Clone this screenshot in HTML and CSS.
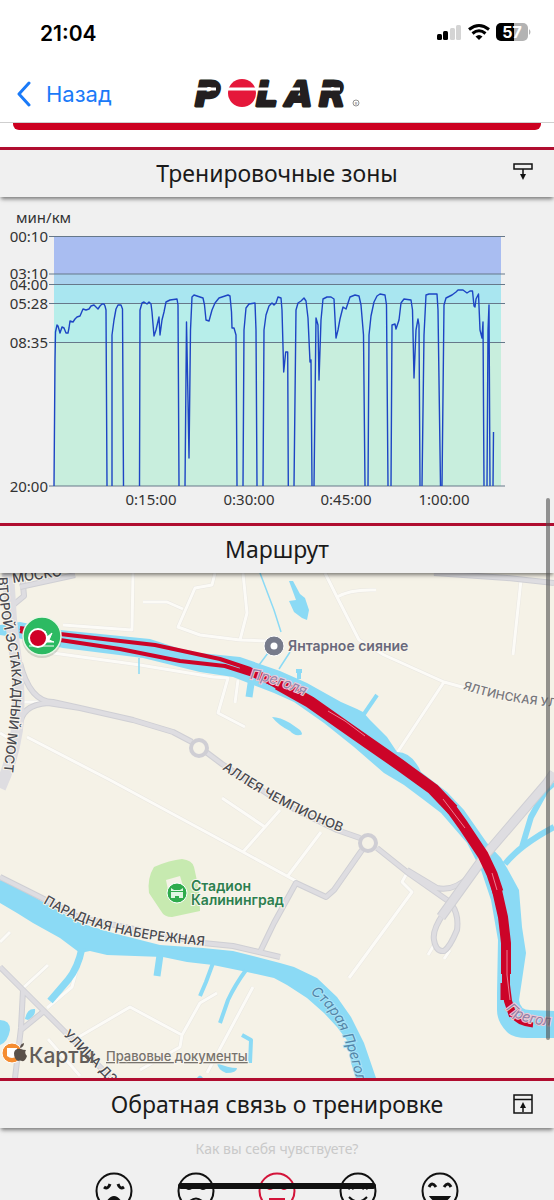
FILE: index.html
```html
<!DOCTYPE html>
<html lang="ru">
<head>
    <meta charset="UTF-8">
    <meta name="viewport" content="width=device-width, initial-scale=1.0">
    <title>Polar</title>
    <link rel="stylesheet" href="styles.css">
</head>
<body>
    <div class="screen">
        <div class="status-bar">
            <span class="clock">21:04</span>
            <svg class="status-icons" width="96" height="20" viewBox="0 0 96 20" aria-hidden="true">
                <rect x="1" y="11" width="5" height="6" rx="1.5"/>
                <rect x="7" y="8" width="5" height="9" rx="1.5"/>
                <rect x="14" y="5" width="5" height="12" rx="1.5" fill="#d4d4d4"/>
                <rect x="20" y="2" width="5" height="15" rx="1.5" fill="#d4d4d4"/>
                <g fill="none" stroke="#000" stroke-width="3">
                    <path d="M33 6.5Q43 -1.5 53 6.5"/>
                    <path d="M36.5 10.5Q43 5 49.5 10.5"/>
                </g>
                <path d="M39.500 13.500Q43 10.500 46.500 13.500L43 17Z"/>
                <rect x="60" y="0" width="32" height="18" rx="5" fill="#b3b3b3"/>
                <path d="M65 0H78V18H65A5 5 0 0 1 60 13V5A5 5 0 0 1 65 0Z"/>
                <path d="M93 6Q96 9 93 12Z" fill="#b3b3b3"/>
                <text class="battery-text" x="76" y="15">57</text>
            </svg>
        </div>

        <header class="nav">
            <a class="back" href="#">
                <svg width="16" height="26" viewBox="0 0 16 26" aria-hidden="true">
                    <path d="M13 2L3 13L13 24" fill="none" stroke="#1a7af8" stroke-width="3" stroke-linecap="round" stroke-linejoin="round"/>
                </svg>
                Назад
            </a>
            <svg class="logo" width="170" height="30" viewBox="0 0 170 30" role="img" aria-label="Polar">
                <text class="logo-text" x="3 64 94 127" y="27">PLAR</text>
                <circle cx="50" cy="14" r="14" fill="#e5173a"/>
                <path d="M4 10H24M34 10H108M124 10H148" stroke="#fff" stroke-width="3"/>
                <circle cx="164" cy="24" r="3" fill="none" stroke="#666" stroke-width="0.700"/>
                <text class="logo-mark" x="164" y="26">R</text>
            </svg>
        </header>

        <main>
            <div class="card-end"></div>

            <section>
                <div class="section-head">
                    <h2>Тренировочные зоны</h2>
                    <button class="toggle" type="button" aria-label="Развернуть">
                        <svg width="20" height="20" viewBox="0 0 20 20" fill="none" stroke="#111" stroke-width="1.500">
                            <path d="M1 1H19V6H1ZM10 6V12"/>
                            <path d="M7 11H13L10 17Z" fill="#111" stroke="none"/>
                        </svg>
                    </button>
                </div>
                <svg class="chart" viewBox="0 197 554 326" role="img" aria-label="Темп по зонам">
                    <rect x="54" y="236" width="447" height="38" fill="#a9bdf1"/>
                    <rect x="54" y="274" width="447" height="10" fill="#a9d2ee"/>
                    <rect x="54" y="284" width="447" height="19" fill="#a9e6f0"/>
                    <rect x="54" y="303" width="447" height="39" fill="#b7eeea"/>
                    <rect x="54" y="342" width="447" height="144" fill="#c8eedd"/>
                    <path d="M49 236.500H505M49 274H505M49 284.500H505M49 303.500H505M49 342.500H505M49 486H505" stroke="#66788a" stroke-width="1.200"/>
                    <path class="pace" d="M54 486L55 360L55.500 332L57 325L58 326L60 333L62 327L64 328L66 333L68 333L69 328L70 321L73 322L75 319L77 317L80 316L83 309L86 310L89 309L91 306L94 305L96 307L98 309L100 306L102 304L104 304L105 306L106 310L107 486
                        M112 486V335L114 320L116 309L118 305L121 305L122.500 309L123.500 486
                        M139.500 486L140 310L142 303L144 302L147 304L149 302L151 304L152 312L154 336L156 330L159 317L160 335L162 320L164 312L166 302L170 300L177 299L178 305L179 486
                        M185 486L186.500 322L188 400L189 458L190.500 330L192 297L194 295L200 297L203 298L204.500 305L206 320L209 321L212 310L215 303L219 298L225 296L228 295L230 296L231.500 312L232 328L234 328L236 335L237 486
                        M243 486L244 330L246 308L249 304L255 303L256 330L257 486
                        M263 486L264 330L266 315L269 306L272 303L274 305L276 303L278 297L281 298L282 310L283.700 372L285.700 352L287.700 352L288.300 486
                        M294 486L296 310L298 303L301 301L304 298L306 301L308 318L310 362L311 360L312 486
                        M314 486L316 318L318 325L319 380L321 320L323 299L327 297L331 297L334 299L336 338L338 330L340 319L343 307L346 309L350 297L355 295L359 296L361 305L363.500 335L365 486
                        M368 486L369 335L371 316L374 302L377 296L380 294L385 295L386.500 305L388 486
                        M391 486L392 325L395 324L396 329L399 320L401 303L404 299L411 300L412.500 310L414 378L416 330L418 319L419 325L420 486
                        M422 486L424 335L426 295L429 294L437 294L438 310L440.500 486
                        M442 486L444 305L446 298L452 295L456 292L458 290L463 290L467 293L470 291L472.500 291L474 306L475 307L476 299L478.500 294L480 330L482 338L483 322L484 486
                        M487 486L488 330L489 305L490 486M493 486L493.500 432"/>
                    <g class="axis">
                        <text x="16" y="223">мин/км</text>
                        <g text-anchor="end">
                            <text x="48" y="242">00:10</text>
                            <text x="48" y="279">03:10</text>
                            <text x="48" y="290">04:00</text>
                            <text x="48" y="309">05:28</text>
                            <text x="48" y="348">08:35</text>
                            <text x="48" y="492">20:00</text>
                        </g>
                        <g text-anchor="middle">
                            <text x="151" y="505">0:15:00</text>
                            <text x="249" y="505">0:30:00</text>
                            <text x="346" y="505">0:45:00</text>
                            <text x="444" y="505">1:00:00</text>
                        </g>
                    </g>
                </svg>
            </section>

            <section>
                <div class="section-head">
                    <h2>Маршрут</h2>
                </div>
                <svg class="map" viewBox="0 573 554 505" role="group" aria-label="Карта маршрута">
                    <defs>
                        <path id="p-most" d="M-2 577C0 630 13 650 12 690C11 725 5 740 2 800"/>
                        <path id="p-mosk" d="M13 583L62 576"/>
                        <path id="p-alley" d="M222 769Q285 813 362 840"/>
                        <path id="p-yalta" d="M463 689Q505 704 570 708"/>
                        <path id="p-parad" d="M43 903C90 931 130 939 225 948"/>
                        <path id="p-ulitsa" d="M63 1035L125 1098"/>
                        <path id="p-preg" d="M250 679Q282 683 325 706"/>
                        <path id="p-preg2" d="M506 1009Q520 1029 575 1025"/>
                        <path id="p-old" d="M310 993C342 1015 348 1048 362 1100"/>
                    </defs>

                    <!-- small streets -->
                    <path class="street-edge" d="M133 573L132 630L63 625M143 602H167L183 609M215 573L212 585L195 588L178 627L200 635L240 640L247 613L243 573M240 640L267 641M53 653L140 665L213 677L228 678L218 713L245 727M238 680L235 703M27 737L110 780L243 852L296 881M222 798L265 827M280 810L243 852M321 832L287 877M407 873L402 882L412 892L349 978M325 573L337 597L359 640L384 655L444 682L480 692M337 597Q350 589 376 590M521 580L513 655M444 682L397 753M48 965L23 988M80 957L72 987L47 1008M77 1038L130 1007L182 1035L180 1047L140 1070M182 1035L200 1003L217 993M253 987L207 1073M0 733L20 745M0 942L10 932M48 1039L80 1076M20 702H50M434 945L428 955M450 950L444 959"/>
                    <path class="street" d="M133 573L132 630L63 625M143 602H167L183 609M215 573L212 585L195 588L178 627L200 635L240 640L247 613L243 573M240 640L267 641M53 653L140 665L213 677L228 678L218 713L245 727M238 680L235 703M27 737L110 780L243 852L296 881M222 798L265 827M280 810L243 852M321 832L287 877M407 873L402 882L412 892L349 978M325 573L337 597L359 640L384 655L444 682L480 692M337 597Q350 589 376 590M521 580L513 655M444 682L397 753M48 965L23 988M80 957L72 987L47 1008M77 1038L130 1007L182 1035L180 1047L140 1070M182 1035L200 1003L217 993M253 987L207 1073M0 733L20 745M0 942L10 932M48 1039L80 1076M20 702H50M434 945L428 955M450 950L444 959"/>

                    <!-- rivers and ponds -->
                    <g fill="#8bdaf5">
                        <path d="M0 625L20 622L60 630L150 639L190 652L240 657L280 671L307 683L341 702L357 709L363 712L370 720L387 737L397 752Q412 752 421 772L447 792L464 810L487 843L501 858L507 868L519 890L522 927L526 953L522 980L519 1000Q520 1010 530 1010L554 1011V1038H527Q513 1038 507 1032Q497 1022 497 1010V993L498 940L491 900L481 870L467 843L441 813L424 800L404 785L384 773L354 747L324 723L294 702L274 693L233 677L200 672L143 658L63 648L13 637L0 635Z"/>
                        <path d="M0 880L20 888L43 902L80 923L113 933L160 945L203 948L233 951L280 963L294 967L317 978L337 997L351 1017L364 1043L376 1078H356L351 1063L349 1043L337 1027L324 1013L307 998L287 985L274 978L247 972L213 965L187 962L163 957L107 955L90 951L80 953L60 938L33 923L17 913L0 903Z"/>
                        <path d="M289 581L293 581L300 594L305 598L309 610L307 620L302 618L294 612L289 601L296 600Z"/>
                        <path d="M272 717Q280 717 290 723L300 730Q304 735 300 735Q294 736 290 731Q278 725 272 717Z"/>
                        <path d="M0 1020Q10 1020 10 1030Q8 1042 0 1045ZM25 1019Q27 1008 35 1009Q36 1016 28 1020ZM217 1063Q228 1068 237 1068Q237 1073 226 1073Q218 1070 217 1063ZM197 1078Q200 1073 203 1078Z"/>
                    </g>
                    <g fill="none" stroke="#8bdaf5" stroke-linejoin="round">
                        <path stroke-width="7" d="M82 948Q78 968 68 980L50 1001M160 955L157 976M252 677L249 697"/>
                        <path stroke-width="4" d="M213 963L206 982L200 996M246 970Q235 985 228 1000L220 1023M242 1035L251 1040L250 1063M364 714L377 695M299 670V679M296 671H302"/>
                        <path stroke-width="6" d="M505 864Q520 845 554 827M522 847L531 817L546 790L554 783"/>
                        <path stroke-width="1.500" d="M260 573L274 610L281 632M290 652L279 669M268 653L259 665M139 658V674"/>
                    </g>

                    <path d="M154 867Q170 860 182 859Q192 860 194 867L199 890L200 911L172 917Q164 917 161 911L149 893Q147 878 154 867Z" fill="#c7eab0"/>
                    <path d="M166 880L180 876L183 886L168 890Z" fill="#f5f2e7"/>

                    <!-- main roads -->
                    <path class="road-edge" d="M20 663Q30 702 53 702L80 708L133 720L173 732L192 742M80 708L48 703Q20 705 20 727M206 752L222 764L280 802L337 830L360 838M377 848L407 872L454 905M407 870L437 888Q454 892 471 875M362 850L334 890L326 897L296 883L274 923L260 952M0 877L40 897L80 918L203 943L233 946L280 957M434 573L507 578L554 583M12 606L24 596L22 573"/>
                    <path class="road" d="M20 663Q30 702 53 702L80 708L133 720L173 732L192 742M80 708L48 703Q20 705 20 727M206 752L222 764L280 802L337 830L360 838M377 848L407 872L454 905M407 870L437 888Q454 892 471 875M362 850L334 890L326 897L296 883L274 923L260 952M0 877L40 897L80 918L203 943L233 946L280 957M434 573L507 578L554 583M12 606L24 596L22 573"/>
                    <path class="road-edge" d="M0 967L23 990L43 1010L63 1030L110 1077M23 990L21 1028L15 1078M43 1012L21 1030M444 913Q432 930 434 940Q436 952 444 951Q450 947 457 930Q459 915 452 905M20 587L75 575"/>
                    <path class="road" d="M0 967L23 990L43 1010L63 1030L110 1077M23 990L21 1028L15 1078M43 1012L21 1030M444 913Q432 930 434 940Q436 952 444 951Q450 947 457 930Q459 915 452 905M20 587L75 575"/>
                    <path d="M8 573L11 620L17 670Q20 700 17 730Q12 762 0 788" fill="none" stroke="#dedde1" stroke-width="12"/>
                    <path d="M554 773L547 783L487 853L441 917" fill="none" stroke="#cfcfd4" stroke-width="10"/>
                    <path d="M554 773L547 783L487 853L441 917" fill="none" stroke="#dedde1" stroke-width="8"/>
                    <g fill="#f5f2e7" stroke="#cfced4" stroke-width="4">
                        <circle cx="199" cy="748" r="8"/>
                        <circle cx="368" cy="843" r="8"/>
                    </g>

                    <!-- recorded track -->
                    <g fill="none" stroke="#cc0428" stroke-linejoin="round">
                        <path stroke-width="4" d="M20 628L60 634L155 645L220 659L250 669L275 680M20 631L60 640L120 649L180 661L225 666L250 674L275 685"/>
                        <path stroke-width="7" d="M240 668L256 674L275 684L296 696"/>
                        <path stroke-width="12" d="M278 684L310 702L337 721L367 742L400 765L433 789L453 810"/>
                        <path stroke-width="11" d="M448 804L463 825L483 855L492 874L498 892"/>
                        <path stroke-width="10" d="M496 886L503 917L506 943L506 974"/>
                        <path stroke-width="8" d="M506 970L506 985L508 1001L513 1016"/>
                        <path stroke-width="5" d="M503 983V1000M511 1012Q515 1023 533 1025"/>
                    </g>
                    <path d="M328 711L345 721L365 736M443 799L465 828M492 873L497 890M507 950V975L510 1000" fill="none" stroke="#ec7d92" stroke-width="1"/>

                    <g class="road-label">
                        <text><textPath href="#p-mosk">МОСКО</textPath></text>
                        <text><textPath href="#p-most">ВТОРОЙ ЭСТАКАДНЫЙ МОСТ</textPath></text>
                        <text><textPath href="#p-alley">АЛЛЕЯ ЧЕМПИОНОВ</textPath></text>
                        <text class="minor"><textPath href="#p-yalta">ЯЛТИНСКАЯ УЛИ</textPath></text>
                        <text><textPath href="#p-parad">ПАРАДНАЯ НАБЕРЕЖНАЯ</textPath></text>
                        <text><textPath href="#p-ulitsa">УЛИЦА ДЗ</textPath></text>
                    </g>
                    <g class="water-label">
                        <text class="on-track"><textPath href="#p-preg">Преголя</textPath></text>
                        <text class="on-track"><textPath href="#p-preg2">Прегол</textPath></text>
                        <text><textPath href="#p-old">Старая Прегол</textPath></text>
                    </g>

                    <!-- places -->
                    <circle cx="274" cy="646" r="10" fill="#777b8b" stroke="#fff" stroke-width="1"/>
                    <circle cx="274" cy="646" r="3.500" fill="#fff"/>
                    <text class="place" x="288" y="651">Янтарное сияние</text>

                    <circle cx="177" cy="893" r="10" fill="#2eab4c" stroke="#fff" stroke-width="1"/>
                    <path d="M171 888L174 890H180L183 888V891H171ZM171 892H183V898H179V896H175V898H171Z" fill="#dff5e2"/>
                    <g class="stadium">
                        <text class="place" x="191" y="891">Стадион</text>
                        <text class="place" x="191" y="905">Калининград</text>
                    </g>

                    <!-- start and finish -->
                    <circle cx="42" cy="638" r="20" fill="#7f8b7f" opacity="0.300"/>
                    <circle cx="42" cy="636" r="19" fill="#2cba62" stroke="#e9f7e7" stroke-width="1.500"/>
                    <path d="M29 646H54M45 631L47 637L52 633L49 640L54 642H36Z" fill="#fff" stroke="#fff" stroke-width="1"/>
                    <circle cx="38" cy="638" r="9" fill="#d00027" stroke="#fff" stroke-width="2"/>

                    <circle cx="12" cy="1053" r="10" fill="#f58c30" stroke="#fff" stroke-width="1"/>
                    <path d="M7 1048H17V1056Q12 1060 7 1056Z" fill="#fff"/>
                    <path d="M21 1049Q23 1050 26 1050Q24 1053 27 1056Q25 1062 22 1061Q20 1060 18 1061Q14 1059 14 1053Q15 1048 21 1049ZM20 1048Q20 1044 24 1043Q24 1047 20 1048Z" fill="#59504a"/>
                    <text class="maps-brand" x="29" y="1063">Карты</text>
                    <a href="#"><text class="legal" x="106" y="1061">Правовые документы</text></a>
                </svg>
            </section>

            <section>
                <div class="section-head">
                    <h2>Обратная связь о тренировке</h2>
                    <button class="toggle" type="button" aria-label="Свернуть">
                        <svg width="20" height="20" viewBox="0 0 20 20" fill="none" stroke="#111" stroke-width="1.500">
                            <path d="M1 1H19V19H1ZM1 5.500H19M10 18V12"/>
                            <path d="M7 14H13L10 8Z" fill="#111" stroke="none"/>
                        </svg>
                    </button>
                </div>
                <form class="feedback">
                    <p>Как вы себя чувствуете?</p>
                    <div class="faces">
                        <label class="face" aria-label="Очень плохо">
                            <input type="radio" name="mood">
                            <svg width="38" height="38" viewBox="0 0 38 38">
                                <circle cx="19" cy="19" r="17.500"/>
                                <path d="M9 15Q13 18 15 12M23 12Q25 18 29 15" stroke-width="3"/>
                                <path d="M13 29Q19 21 25 29Z" fill="currentColor"/>
                            </svg>
                        </label>
                        <label class="face" aria-label="Плохо">
                            <input type="radio" name="mood">
                            <svg width="38" height="38" viewBox="0 0 38 38">
                                <circle cx="19" cy="19" r="17.500"/>
                                <path d="M9 15Q12 18 15 15M23 15Q26 18 29 15" stroke-width="3"/>
                                <path d="M13 29Q19 24 25 29"/>
                            </svg>
                        </label>
                        <label class="face" aria-label="Нормально">
                            <input type="radio" name="mood" checked>
                            <svg width="38" height="38" viewBox="0 0 38 38">
                                <circle cx="19" cy="19" r="17.500"/>
                                <path d="M9 15Q12 18 15 15M23 15Q26 18 29 15" stroke-width="3"/>
                                <path d="M11 27H27"/>
                            </svg>
                        </label>
                        <label class="face" aria-label="Хорошо">
                            <input type="radio" name="mood">
                            <svg width="38" height="38" viewBox="0 0 38 38">
                                <circle cx="19" cy="19" r="17.500"/>
                                <path d="M9 17Q12 13 15 17M23 17Q26 13 29 17" stroke-width="3"/>
                                <path d="M10 25Q19 34 28 25"/>
                            </svg>
                        </label>
                        <label class="face" aria-label="Отлично">
                            <input type="radio" name="mood">
                            <svg width="38" height="38" viewBox="0 0 38 38">
                                <circle cx="19" cy="19" r="17.500"/>
                                <path d="M8 15Q11 9 15 15M23 15Q27 9 30 15" stroke-width="3"/>
                                <path d="M10 25H28Q19 36 10 25Z" fill="currentColor"/>
                            </svg>
                        </label>
                    </div>
                </form>
            </section>
        </main>

        <div class="scroll-thumb"></div>
        <div class="home-indicator"></div>
    </div>
</body>
</html>
```
FILE: styles.css
```css
body {
    margin: 0;
    background-color: #f0f0f0;
    color: #1a1a1a;
    font-family: "Noto Sans", sans-serif;
}
.screen {
    position: relative;
    height: 100vh;
    overflow: hidden;
}
.status-bar {
    display: flex;
    justify-content: space-between;
    align-items: center;
    height: 66px;
    padding: 0 22px 0 40px;
    box-sizing: border-box;
    background-color: white;
}
.clock {
    font-family: Inter, sans-serif;
    font-size: 21px;
    font-weight: 600;
    color: #000;
}
.battery-text {
    font-family: Inter, sans-serif;
    font-size: 16px;
    font-weight: 700;
    fill: #fff;
    text-anchor: middle;
}
.nav {
    display: grid;
    grid-template-columns: 1fr auto 1fr;
    align-items: center;
    height: 57px;
    padding: 0 16px;
    box-sizing: border-box;
    background-color: white;
    border-bottom: 1px solid #cfcfcf;
}
.back {
    display: flex;
    align-items: center;
    gap: 14px;
    color: #1a7af8;
    font-family: Inter, sans-serif;
    font-size: 22px;
    text-decoration: none;
}
.logo {
    overflow: visible;
}
.logo-text {
    font-family: "DejaVu Sans", sans-serif;
    font-size: 34px;
    font-weight: 700;
    font-style: italic;
    fill: #231f20;
    stroke: #231f20;
    stroke-width: 3;
    stroke-linejoin: round;
}
.logo-mark {
    font-family: Inter, sans-serif;
    font-size: 4px;
    fill: #666;
    text-anchor: middle;
}
.card-end {
    height: 24px;
    padding: 0 13px;
    background-color: white;
}
.card-end::before {
    content: "";
    display: block;
    height: 7px;
    background-color: #cc0020;
    border-radius: 0 0 6px 6px;
}
.section-head {
    position: relative;
    display: grid;
    grid-template-columns: 20px 1fr 20px;
    align-items: center;
    height: 50px;
    padding: 0 21px 2px;
    box-sizing: border-box;
    background-color: #f0f0f0;
    border-top: 3px solid #b00d2f;
    box-shadow: 0 3px 4px -1px rgba(0, 0, 0, 0.5);
}
h2 {
    grid-column: 2;
    margin: 0;
    font-size: 23px;
    font-weight: 400;
    text-align: center;
    white-space: nowrap;
}
.toggle {
    width: 20px;
    height: 20px;
    padding: 0;
    border: none;
    background: none;
}
.toggle svg {
    display: block;
}
.chart, .map {
    display: block;
    width: 100%;
}
.pace {
    fill: none;
    stroke: #1d45c4;
    stroke-width: 1.4;
    stroke-linejoin: round;
}
.axis {
    font-size: 15px;
    fill: #333;
}
.map {
    background-color: #f5f2e7;
    font-family: Inter, sans-serif;
}
.street-edge, .street, .road-edge, .road {
    fill: none;
    stroke-linejoin: round;
}
.street-edge {
    stroke: #e9e7e2;
    stroke-width: 4;
}
.street {
    stroke: #fcfbf7;
    stroke-width: 3;
}
.road-edge {
    stroke: #cfcfd4;
    stroke-width: 6;
}
.road {
    stroke: #dedde1;
    stroke-width: 4;
}
.road-label text, .water-label text, .place, .legal {
    paint-order: stroke;
    stroke: #f8f5ec;
    stroke-width: 2;
}
.road-label {
    font-size: 13px;
    font-weight: 500;
    fill: #4a4a50;
}
.road-label .minor {
    font-size: 12px;
    fill: #77777c;
}
.water-label {
    font-size: 14px;
    font-style: italic;
    fill: #5285a8;
}
.water-label text {
    stroke: #a9e2f5;
}
.water-label .on-track {
    fill: #8f83aa;
    stroke: #f3c6d0;
}
.place {
    font-size: 14px;
    font-weight: 600;
    fill: #69697b;
}
.stadium .place {
    fill: #2c7f4f;
}
.maps-brand {
    font-size: 21px;
    font-weight: 500;
    fill: #625d59;
}
.legal {
    font-size: 13px;
    font-weight: 500;
    fill: #77736d;
    text-decoration: underline;
}
.feedback p {
    margin: 0;
    padding: 10px 0 12px;
    font-size: 14px;
    line-height: 22px;
    text-align: center;
    color: #c9c9c9;
}
.faces {
    display: flex;
    justify-content: space-evenly;
    padding: 0 52px;
}
.face {
    display: block;
    color: #111;
}
.face svg {
    display: block;
    fill: none;
    stroke: currentColor;
    stroke-width: 2;
}
.face input {
    position: absolute;
    opacity: 0;
}
.face:has(input:checked) {
    color: #d3143a;
}
.scroll-thumb {
    position: absolute;
    top: 498px;
    right: 4px;
    width: 4px;
    height: 542px;
    border-radius: 2px;
    background-color: rgba(80, 80, 80, 0.6);
}
.home-indicator {
    position: absolute;
    bottom: 11px;
    left: 50%;
    width: 198px;
    height: 6px;
    transform: translateX(-50%);
    border-radius: 3px;
    background-color: #111;
}
```
